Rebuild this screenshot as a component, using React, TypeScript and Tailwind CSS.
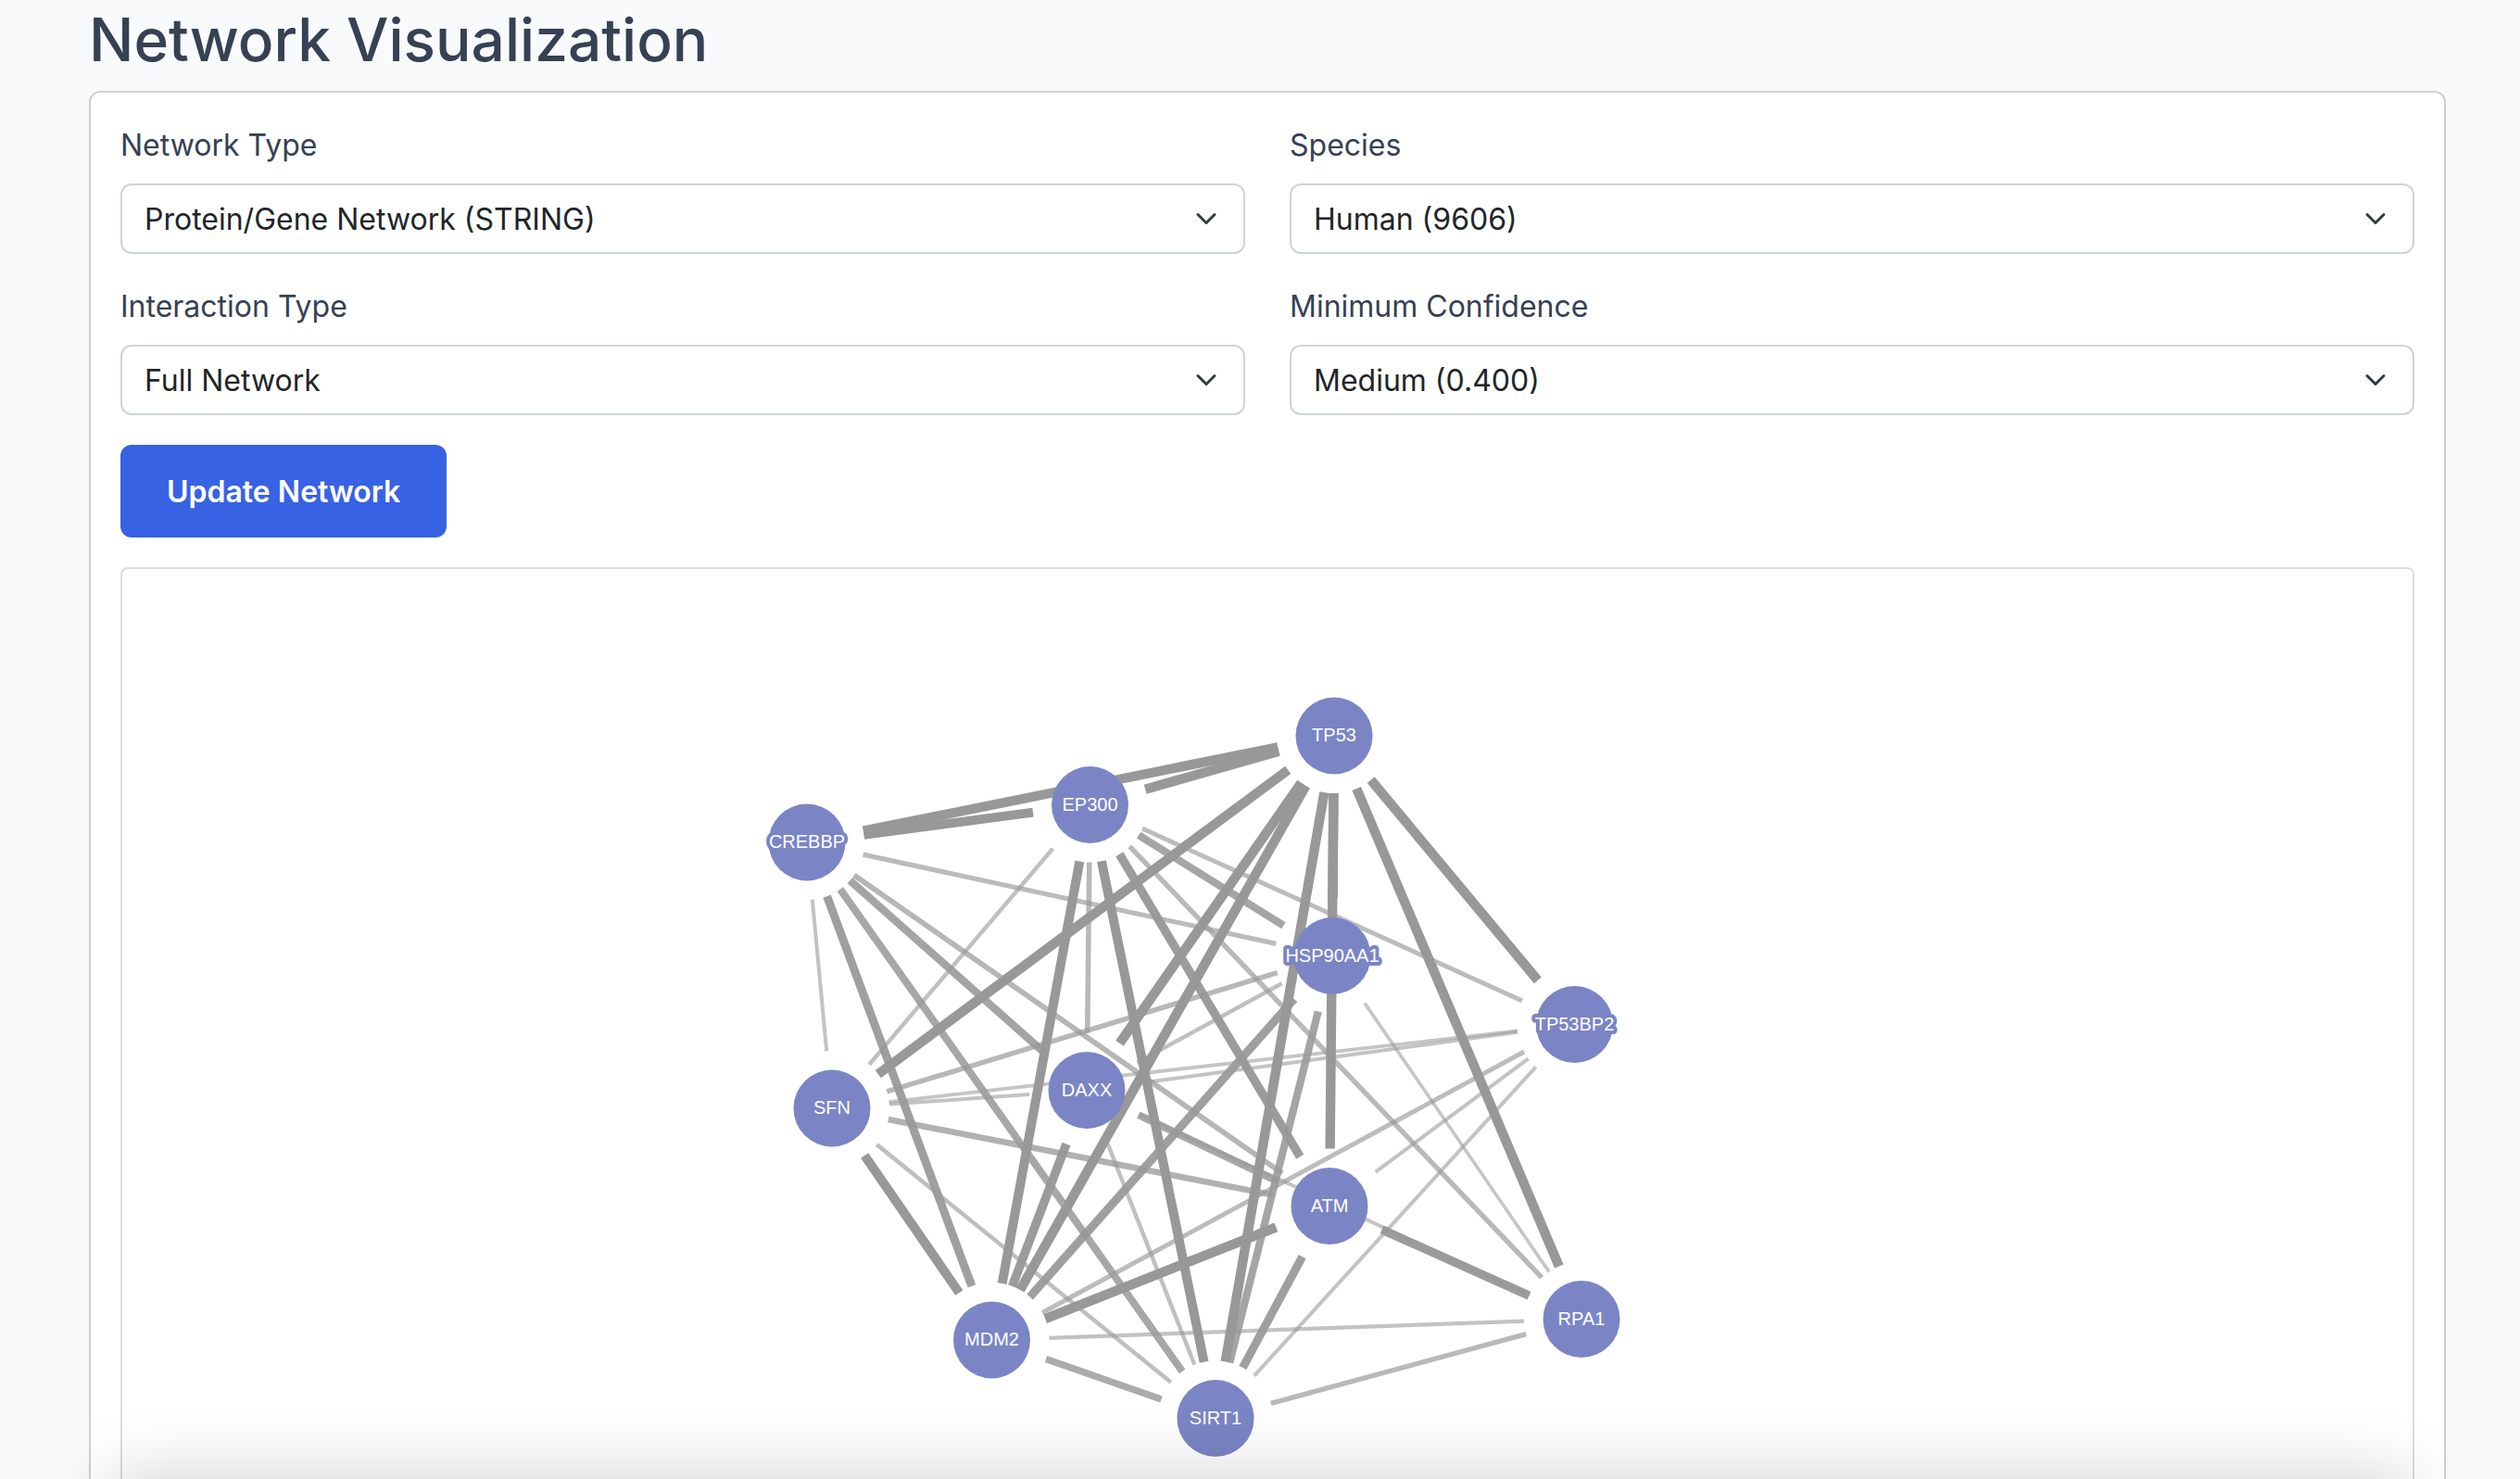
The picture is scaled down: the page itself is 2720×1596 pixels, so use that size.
import { useId } from "react";

type NodeId =
  | "CREBBP" | "EP300" | "TP53" | "HSP90AA1" | "TP53BP2" | "SFN"
  | "DAXX" | "ATM" | "MDM2" | "SIRT1" | "RPA1";

const nodes: Record<NodeId, [number, number]> = {
  CREBBP: [739, 295],
  EP300: [1044.5, 254.5],
  TP53: [1308, 180],
  HSP90AA1: [1306, 417.5],
  TP53BP2: [1567.5, 491.5],
  SFN: [766, 582],
  DAXX: [1041, 562.5],
  ATM: [1303, 687.5],
  MDM2: [938.5, 832],
  SIRT1: [1180, 916.5],
  RPA1: [1575, 809.5],
};

const edges: [NodeId, NodeId, number][] = [
  ["HSP90AA1", "RPA1", 3.6],
  ["CREBBP", "SFN", 4],
  ["SFN", "DAXX", 4],
  ["SFN", "TP53BP2", 3.8],
  ["DAXX", "TP53BP2", 4],
  ["TP53BP2", "ATM", 4],
  ["TP53BP2", "SIRT1", 4],
  ["DAXX", "RPA1", 4],
  ["EP300", "SFN", 4.4],
  ["HSP90AA1", "DAXX", 4.4],
  ["DAXX", "SIRT1", 4.4],
  ["SFN", "SIRT1", 4.6],
  ["MDM2", "RPA1", 4.2],
  ["TP53BP2", "MDM2", 5],
  ["EP300", "TP53BP2", 5],
  ["CREBBP", "HSP90AA1", 5.2],
  ["EP300", "RPA1", 5.4],
  ["SIRT1", "RPA1", 5.4],
  ["HSP90AA1", "SFN", 5.6],
  ["CREBBP", "ATM", 5.8],
  ["EP300", "DAXX", 5.6],
  ["SFN", "ATM", 6.6],
  ["MDM2", "SIRT1", 7.4],
  ["CREBBP", "SIRT1", 8],
  ["HSP90AA1", "SIRT1", 8.2],
  ["EP300", "HSP90AA1", 8.2],
  ["CREBBP", "DAXX", 8.4],
  ["DAXX", "ATM", 8],
  ["CREBBP", "MDM2", 9],
  ["HSP90AA1", "MDM2", 9],
  ["ATM", "SIRT1", 9],
  ["EP300", "ATM", 9.4],
  ["DAXX", "MDM2", 9.6],
  ["ATM", "RPA1", 9.4],
  ["EP300", "SIRT1", 10],
  ["EP300", "MDM2", 10],
  ["CREBBP", "EP300", 10],
  ["SFN", "MDM2", 10],
  ["ATM", "MDM2", 10.4],
  ["TP53", "CREBBP", 10.4],
  ["TP53", "EP300", 10.4],
  ["TP53", "SFN", 10.4],
  ["TP53", "DAXX", 10.4],
  ["TP53", "MDM2", 10.4],
  ["TP53", "SIRT1", 10.4],
  ["TP53", "HSP90AA1", 10.4],
  ["TP53", "ATM", 10.4],
  ["TP53", "RPA1", 10.4],
  ["TP53", "TP53BP2", 10.4],
];

const NODE_RADIUS = 41.5;
const EDGE_GAP = 62;

function Edge({ from, to, width }: { from: NodeId; to: NodeId; width: number }) {
  const [x1, y1] = nodes[from];
  const [x2, y2] = nodes[to];
  const length = Math.hypot(x2 - x1, y2 - y1);
  const dx = ((x2 - x1) / length) * EDGE_GAP;
  const dy = ((y2 - y1) / length) * EDGE_GAP;
  return (
    <line
      x1={x1 + dx}
      y1={y1 + dy}
      x2={x2 - dx}
      y2={y2 - dy}
      stroke="#989898"
      strokeWidth={width}
      strokeOpacity={Math.min(1, 0.58 + ((width - 4) / 6) * 0.42)}
    />
  );
}

function NetworkGraph() {
  return (
    <svg viewBox="0 0 2472 1000" className="block h-[1000px] w-full" role="img" aria-label="Protein interaction network">
      {edges.map(([from, to, width]) => (
        <Edge key={from + to} from={from} to={to} width={width} />
      ))}
      {(Object.keys(nodes) as NodeId[]).map((id) => (
        <g key={id}>
          <circle cx={nodes[id][0]} cy={nodes[id][1]} r={NODE_RADIUS} fill="#7b85c5" />
          <text
            x={nodes[id][0]}
            y={nodes[id][1] + 6}
            textAnchor="middle"
            fill="#ffffff"
            stroke="#7b85c5"
            strokeWidth={8}
            strokeLinejoin="round"
            paintOrder="stroke"
            className="font-['Liberation_Sans',sans-serif] text-[20px]"
          >
            {id}
          </text>
        </g>
      ))}
    </svg>
  );
}

function SelectField({ label, options }: { label: string; options: string[] }) {
  const id = useId();
  return (
    <div>
      <label htmlFor={id} className="mb-4 block text-[32px] leading-[50px] text-gray-700">
        {label}
      </label>
      <div className="relative">
        <select
          id={id}
          className="block h-[76px] w-full appearance-none rounded-xl border-2 border-[#ced4da] bg-white pt-0.5 pr-18 pl-6 text-[32px] leading-[48px] text-[#212529]"
        >
          {options.map((option) => (
            <option key={option}>{option}</option>
          ))}
        </select>
        <svg
          viewBox="0 0 16 16"
          className="pointer-events-none absolute inset-y-0 right-[30px] my-auto size-6"
          fill="none"
          stroke="#343a40"
          strokeWidth={2}
          strokeLinecap="round"
          strokeLinejoin="round"
          aria-hidden="true"
        >
          <path d="m2 5 6 6 6-6" />
        </svg>
      </div>
    </div>
  );
}

export default function App() {
  return (
    <div className="relative h-screen overflow-hidden bg-slate-50 font-[Inter,sans-serif]">
      <main className="pt-1 pr-20 pl-24">
        <h1 className="mb-4 text-[64px] leading-[78px] font-medium text-gray-700">Network Visualization</h1>
        <section className="rounded-xl border-2 border-[#d0d0d0] bg-white p-8">
          <form onSubmit={(event) => event.preventDefault()}>
            <div className="grid grid-cols-2 gap-x-12 gap-y-8">
              <SelectField label="Network Type" options={["Protein/Gene Network (STRING)"]} />
              <SelectField label="Species" options={["Human (9606)"]} />
              <SelectField label="Interaction Type" options={["Full Network"]} />
              <SelectField label="Minimum Confidence" options={["Medium (0.400)"]} />
            </div>
            <button
              type="submit"
              className="my-8 block rounded-xl bg-[#3862e4] px-[50px] pt-[26px] pb-6 text-[32px] leading-[50px] font-semibold text-white"
            >
              Update Network
            </button>
          </form>
          <div className="overflow-hidden rounded-lg border-2 border-[#dddddd]">
            <NetworkGraph />
          </div>
        </section>
      </main>
      <div className="pointer-events-none absolute inset-x-30 top-full h-40 shadow-[0_0_80px_rgba(0,0,0,0.2)]" />
    </div>
  );
}
